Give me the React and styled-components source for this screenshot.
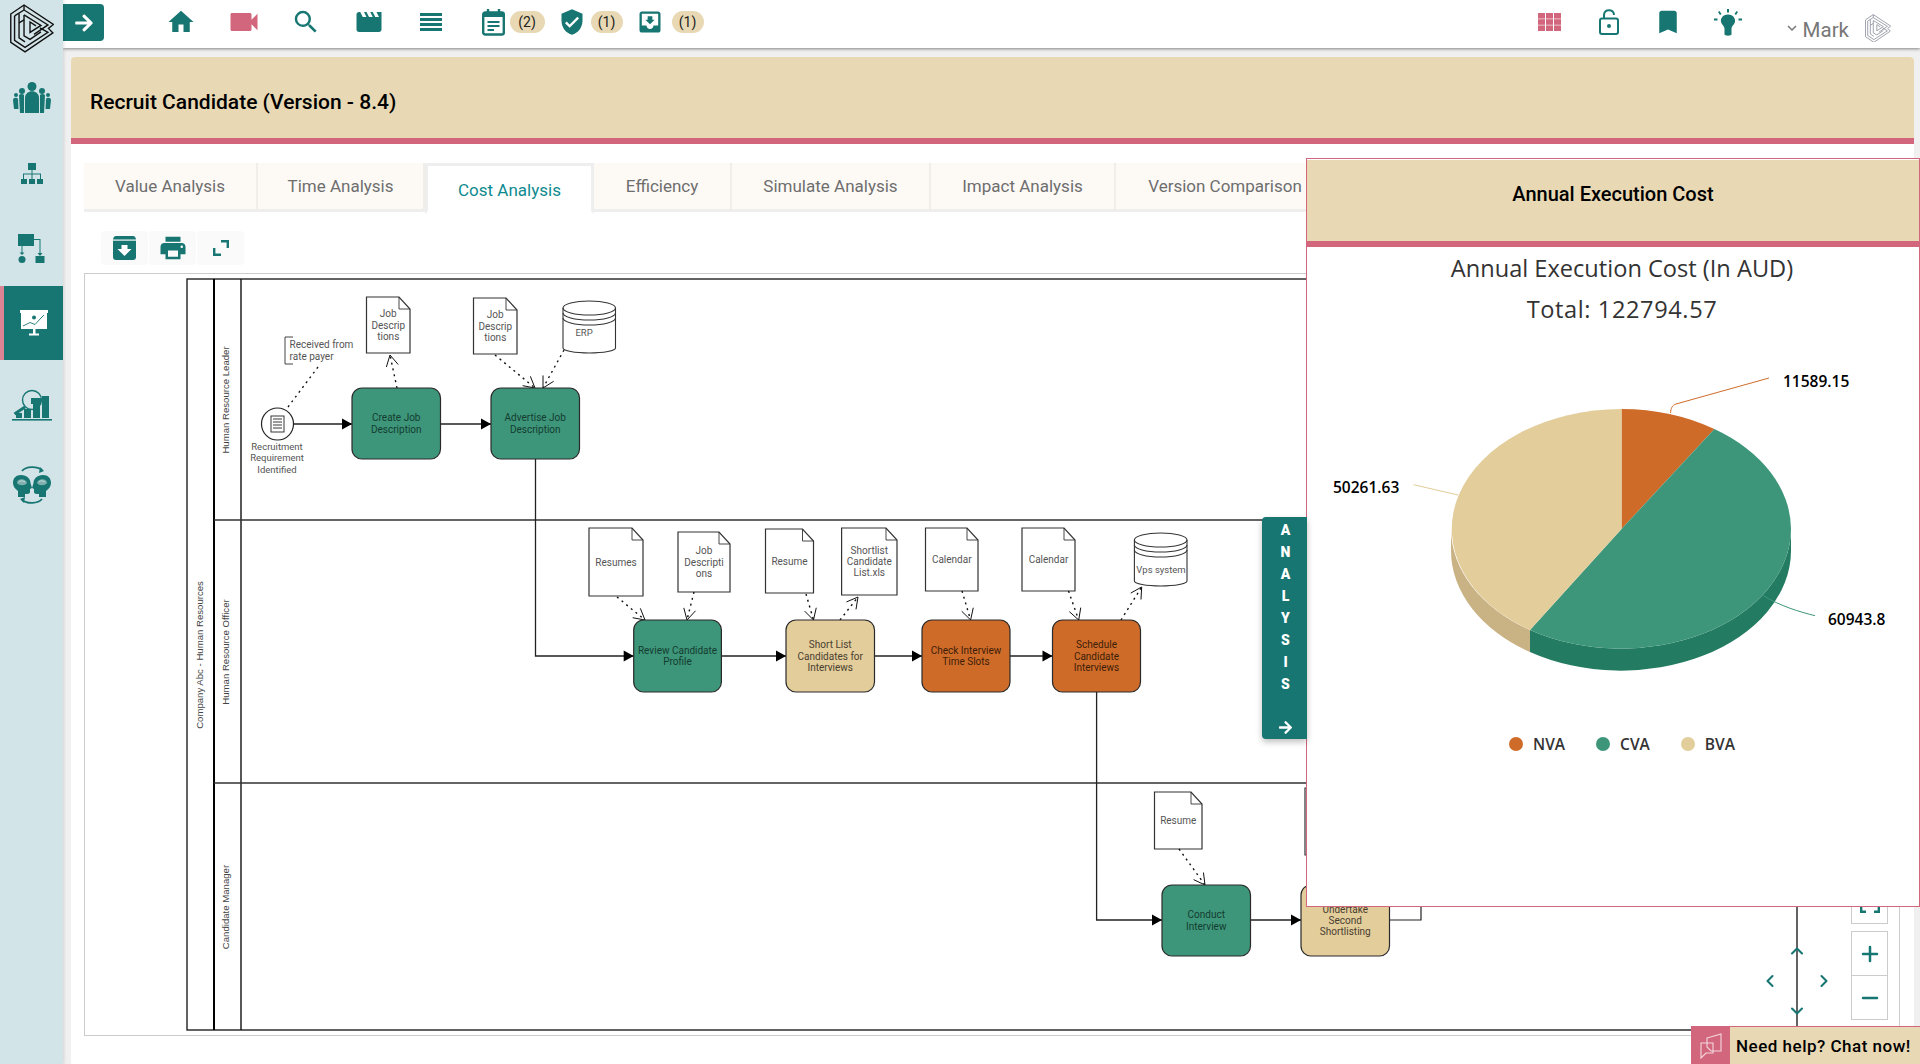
import React from 'react';
import styled, { createGlobalStyle } from 'styled-components';
import { MdHome, MdVideocam, MdSearch, MdMovie, MdVerifiedUser, MdMoveToInbox, MdBookmark, MdPrint, MdKeyboardArrowDown } from 'react-icons/md';
import { FaArrowRight } from 'react-icons/fa';
import { ChevronUp, ChevronDown, ChevronLeft, ChevronRight, Plus, Minus } from 'lucide-react';

const TEAL = '#177672';
const PINK = '#d2667c';
const SAND = '#e8d9b4';
const GREEN = '#3d967a';
const ORANGE = '#cf6b29';
const TAN = '#e2cd9b';

const GlobalStyle = createGlobalStyle`
  html, body { margin: 0; padding: 0; height: 100%; }
  body { font-family: Roboto, "Liberation Sans", sans-serif; overflow: hidden; }
`;

const Shell = styled.div`
  position: relative;
  display: flex;
  height: 100vh;
  background: #f0f0f0;
  overflow: hidden;
`;

const Sidebar = styled.aside`
  width: 63px;
  flex: none;
  display: flex;
  flex-direction: column;
  background: #d3e4e9;
  box-shadow: 1px 0 3px rgba(0, 0, 0, 0.12);
  z-index: 2;
`;

const LogoBox = styled.div`
  height: 61px;
  display: flex;
  justify-content: center;
  padding-top: 4px;
  box-sizing: border-box;
`;

const SideItem = styled.div`
  height: 74px;
  flex: none;
  margin-top: ${(p) => p.$gap || 0}px;
  display: flex;
  align-items: center;
  justify-content: center;
  box-sizing: border-box;
  background: ${(p) => (p.$active ? TEAL : 'transparent')};
  border-left: ${(p) => (p.$active ? '4px solid #dc8396' : 'none')};
  color: ${(p) => (p.$active ? '#fff' : TEAL)};
`;

const Main = styled.div`
  flex: 1;
  min-width: 0;
  display: flex;
  flex-direction: column;
`;

const TopBar = styled.header`
  height: 48px;
  flex: none;
  display: flex;
  background: #fff;
  box-shadow: 0 1px 3px rgba(0, 0, 0, 0.45);
  padding-right: 29px;
  z-index: 1;
`;

const ToggleButton = styled.div`
  width: 41px;
  height: 37px;
  margin-top: 4px;
  margin-right: 46px;
  display: flex;
  align-items: center;
  justify-content: center;
  background: ${TEAL};
  color: #fff;
  border-radius: 0 4px 4px 0;
`;

const Slot = styled.div`
  width: ${(p) => p.$w}px;
  height: 44px;
  display: flex;
  align-items: center;
  justify-content: center;
  color: ${(p) => p.$color || TEAL};
`;

const Notifications = styled.div`
  display: flex;
  align-items: center;
  height: 44px;
  margin-left: 19px;
  gap: 13px;
`;

const Notify = styled.div`
  display: flex;
  align-items: center;
  gap: ${(p) => p.$gap || 5}px;
  color: ${TEAL};
`;

const Badge = styled.span`
  width: ${(p) => p.$w}px;
  height: 22px;
  display: flex;
  align-items: center;
  justify-content: center;
  background: ${SAND};
  border-radius: 11px;
  color: #222;
  font-size: 14px;
`;

const RightTools = styled.div`
  display: flex;
  margin-left: auto;
`;

const UserMenu = styled.div`
  display: flex;
  align-items: center;
  height: 44px;
  margin-left: 25px;
  margin-top: 6px;
  color: #777;
  font-size: 20.5px;
`;

const UserName = styled.span`
  margin: 3px 16px 0 2px;
`;

const Content = styled.main`
  flex: 1;
  min-height: 0;
  display: flex;
  padding: 9px 6px 0 8px;
`;

const Card = styled.section`
  flex: 1;
  min-width: 0;
  display: flex;
  flex-direction: column;
  background: #fff;
  border-radius: 4px 4px 0 0;
`;

const Banner = styled.div`
  height: 87px;
  flex: none;
  box-sizing: border-box;
  display: flex;
  align-items: center;
  padding: 9px 0 0 19px;
  background: ${SAND};
  border-bottom: 6px solid ${PINK};
  border-radius: 4px 4px 0 0;
`;

const BannerTitle = styled.h1`
  margin: 0;
  font-size: 21px;
  font-weight: 500;
  color: #000;
`;

const Tabs = styled.div`
  display: flex;
  flex: none;
  height: 49px;
  margin: 19px 0 0 13px;
`;

const Tab = styled.div`
  width: ${(p) => p.$w}px;
  box-sizing: border-box;
  display: flex;
  align-items: center;
  justify-content: center;
  font-size: 17px;
  background: ${(p) => (p.$active ? '#fff' : '#fdfaf6')};
  color: ${(p) => (p.$active ? '#0e8a8f' : '#6e6e6e')};
  border-bottom: 3px solid ${(p) => (p.$active ? '#fff' : '#eee')};
  border-right: ${(p) => (p.$active ? '3px solid #eee' : '2px solid #f1eeea')};
  border-left: ${(p) => (p.$active ? '3px solid #eee' : 'none')};
  border-top: ${(p) => (p.$active ? '3px solid #eee' : 'none')};
  padding-top: ${(p) => (p.$active ? '3px' : '0')};
  margin-bottom: ${(p) => (p.$active ? '-2px' : '0')};
`;

const Toolbar = styled.div`
  display: flex;
  flex: none;
  gap: 1px;
  margin: 19px 0 0 30px;
`;

const ToolButton = styled.div`
  width: 47px;
  height: 34px;
  display: flex;
  align-items: center;
  justify-content: center;
  background: #fafafa;
  border-radius: 4px;
  color: ${TEAL};
`;

const Canvas = styled.div`
  position: relative;
  flex: 1;
  min-height: 0;
  margin: 8px 14px 28px 13px;
  border: 1px solid #ccc;
  background: #fff;
`;

const DiagramSvg = styled.svg`
  display: block;
`;

const ZoomStack = styled.div`
  position: absolute;
  right: 11px;
  bottom: 15px;
  display: flex;
  flex-direction: column;
  gap: 7px;
`;

const ZoomGroup = styled.div`
  width: 37px;
  display: flex;
  flex-direction: column;
  border: 1px solid #ccc;
  box-sizing: border-box;
  background: #fff;
`;

const ZoomButton = styled.div`
  height: ${(p) => p.$h}px;
  display: flex;
  align-items: center;
  justify-content: center;
  color: ${TEAL};
  & + & { border-top: 1px solid #ccc; }
`;

const NavPad = styled.div`
  position: absolute;
  right: 62px;
  bottom: 9px;
  display: grid;
  grid-template-columns: repeat(3, 27px);
  grid-template-rows: repeat(3, 30px);
  color: ${TEAL};
  place-items: center;
`;

const NavCell = styled.div`
  grid-column: ${(p) => p.$col};
  grid-row: ${(p) => p.$row};
  display: flex;
`;

const Panel = styled.aside`
  position: absolute;
  left: 1306px;
  top: 158px;
  width: 614px;
  height: 749px;
  box-sizing: border-box;
  border: 1px solid ${PINK};
  padding-top: 1px;
  background: #fff;
  z-index: 3;
  display: flex;
  flex-direction: column;
`;

const PanelHeader = styled.div`
  height: 87px;
  flex: none;
  box-sizing: border-box;
  display: flex;
  align-items: center;
  justify-content: center;
  padding-bottom: 13px;
  background: ${SAND};
  border-bottom: 6px solid ${PINK};
  font-size: 20px;
  font-weight: 500;
  color: #000;
`;

const ChartBody = styled.div`
  padding: 1px 0 0 18px;
  display: flex;
  flex-direction: column;
  align-items: center;
`;

const ChartTitle = styled.div`
  font-family: "Open Sans", sans-serif;
  font-size: 23.6px;
  line-height: 41px;
  letter-spacing: ${(p) => p.$spacing || 0}px;
  color: #333;
`;

const ChartSvg = styled.svg`
  display: block;
  margin-top: -1px;
`;

const Legend = styled.div`
  display: flex;
  gap: 31px;
  margin-top: 15px;
  height: 20px;
`;

const LegendItem = styled.div`
  display: flex;
  align-items: center;
  gap: 10px;
  font-family: "Open Sans", sans-serif;
  font-size: 15.5px;
  font-weight: 600;
  color: #333;
`;

const LegendDot = styled.span`
  width: 14px;
  height: 14px;
  border-radius: 50%;
  background: ${(p) => p.$color};
`;

const AnalysisTab = styled.div`
  position: absolute;
  left: -45px;
  top: 358px;
  width: 45px;
  height: 222px;
  box-sizing: border-box;
  padding: 2px 0 0 2px;
  display: flex;
  flex-direction: column;
  align-items: center;
  background: ${TEAL};
  border-radius: 4px 0 0 4px;
  box-shadow: 0 3px 6px rgba(0, 0, 0, 0.25);
  color: #fff;
`;

const AnalysisLetter = styled.span`
  height: 22px;
  line-height: 22px;
  font-size: 14px;
  font-weight: 900;
`;

const AnalysisArrow = styled.div`
  margin-top: auto;
  height: 24px;
  display: flex;
  align-items: center;
`;

const ChatBox = styled.div`
  position: absolute;
  right: 0;
  bottom: 0;
  width: 229px;
  height: 38px;
  display: flex;
  box-sizing: border-box;
  border-top: 1px solid ${PINK};
  background: ${SAND};
  z-index: 4;
`;

const ChatIcon = styled.div`
  width: 39px;
  flex: none;
  display: flex;
  align-items: center;
  justify-content: center;
  background: ${PINK};
`;

const ChatText = styled.div`
  flex: 1;
  display: flex;
  align-items: center;
  padding-left: 6px;
  font-size: 17px;
  font-weight: 500;
  letter-spacing: 0.5px;
  color: #000;
  white-space: nowrap;
`;

const Logo = ({ size = 44, color = '#111' }) => (
  <svg width={size} height={size * 1.11} viewBox="0 0 44 49" fill="none" stroke={color} strokeWidth="1.4" strokeLinejoin="miter">
    <path d="M0.7 10 L14 1 L43.5 20.5 L38.5 24.5 L43 29 L15 48 L0.7 38.5 Z" />
    <path d="M4.5 12 V36.5 L15 43.5 L38 28.5 L30 24" />
    <path d="M9 9.5 V34 L15 38" />
    <path d="M14 1 V6 L38 21 L24 30.5" />
    <path d="M14 11 L31 21.5 L20 28.5 V18 L26 22" />
    <path d="M14 11 V32 L20 35.5 L31 28" />
    <path d="M4.5 12 L14 6" />
    <path d="M9 19 L14 16" />
  </svg>
);

const PeopleIcon = () => (
  <svg width="38" height="32" viewBox="0 0 38 32" fill="currentColor">
    <circle cx="19" cy="4.5" r="4.5" />
    <path d="M12 31 V16 C12 7 26 7 26 16 V31 Z" />
    <circle cx="9" cy="9" r="3" />
    <circle cx="29" cy="9" r="3" />
    <path d="M6 13 C8 11.5 10 12 11 13 L11 31 H7 Z" />
    <path d="M32 13 C30 11.5 28 12 27 13 L27 31 H31 Z" />
    <circle cx="3" cy="13" r="2" />
    <circle cx="35" cy="13" r="2" />
    <path d="M0 18 C0 15.5 4 15 5 17 L5.5 27 H1 Z" />
    <path d="M38 18 C38 15.5 34 15 33 17 L32.5 27 H37 Z" />
  </svg>
);

const OrgIcon = () => (
  <svg width="22" height="22" viewBox="0 0 22 22" fill="currentColor">
    <rect x="7" y="0" width="8" height="7" />
    <path d="M10.5 7 H11.5 V10.5 H20 V16 H19 V11.5 H11.5 V16 H10.5 V11.5 H3 V16 H2 V10.5 H10.5 Z" />
    <rect x="0" y="16" width="6" height="5" />
    <rect x="8" y="16" width="6" height="5" />
    <rect x="16" y="16" width="6" height="5" />
  </svg>
);

const FlowIcon = () => (
  <svg width="27" height="29" viewBox="0 0 27 29" fill="currentColor">
    <rect x="0" y="0" width="16" height="12" />
    <path d="M16 5 H22.5 V21 H21.5 V6 H16 Z" />
    <path d="M3.5 12 H4.5 V19 H3.5 Z" />
    <path d="M1.5 18.5 H6.5 L4 21 Z" />
    <path d="M19.5 19 H24.5 L22 22 Z" />
    <circle cx="4" cy="25.5" r="3.5" />
    <rect x="17.5" y="22" width="9" height="7" />
  </svg>
);

const BoardIcon = () => (
  <svg width="28" height="26" viewBox="0 0 28 26" fill="#fff">
    <rect x="0" y="0" width="28" height="3" />
    <rect x="1" y="3" width="26" height="16" />
    <rect x="13" y="19" width="2.5" height="5" />
    <rect x="9" y="23.5" width="10" height="2" />
    <circle cx="14" cy="7.5" r="2" fill={TEAL} />
    <path d="M3 16 L10 12.5 L15 14.5 L21 8 L24 5" fill="none" stroke={TEAL} strokeWidth="0.9" />
  </svg>
);

const AnalysisIcon = () => (
  <svg width="40" height="32" viewBox="0 0 40 32" fill="currentColor">
    <rect x="0" y="30" width="40" height="1.6" />
    <rect x="30" y="7" width="7" height="22" />
    <rect x="21" y="15" width="7" height="14" />
    <rect x="12" y="20" width="7" height="9" />
    <rect x="4" y="24" width="6" height="5" />
    <rect x="19" y="9" width="10" height="6" />
    <circle cx="20" cy="11" r="9.5" fill="none" stroke="currentColor" strokeWidth="1.4" />
    <path d="M13 18 L2.5 25" fill="none" stroke="currentColor" strokeWidth="3" />
  </svg>
);

const HeadsIcon = () => (
  <svg width="38" height="38" viewBox="0 0 38 38" fill="currentColor">
    <path d="M9 5 C13 0 24 0 29 4" fill="none" stroke="currentColor" strokeWidth="1.8" />
    <path d="M27 1 L31 5 L26 7 Z" />
    <path d="M29 33 C25 38 14 38 9 34" fill="none" stroke="currentColor" strokeWidth="1.8" />
    <path d="M11 37 L7 33 L12 31 Z" />
    <path d="M8 9 C14 9 17.5 13 17.5 17 L19 22 L17 23 V26 C17 28 14 28 12 28 V31 H5 V25 C2 23 0 20 0 17 C0 12 3 9 8 9 Z" />
    <path d="M30 9 C24 9 20.5 13 20.5 17 L19 22 L21 23 V26 C21 28 24 28 26 28 V31 H33 V25 C36 23 38 20 38 17 C38 12 35 9 30 9 Z" />
    <path d="M4 17 C4 12 13 12 14 17 C12 20 6 20 4 17 Z M24 17 C25 12 34 12 34 17 C32 20 26 20 24 17 Z" fill="#7fb0ad" />
    <path d="M6 16 C8 14 10 15 12 16 M26 16 C28 14 30 15 32 16" fill="none" stroke="#d3e4e9" strokeWidth="0.8" />
  </svg>
);

const ListIcon = () => (
  <svg width="22" height="18" viewBox="0 0 22 18" fill="currentColor">
    <rect y="0" width="22" height="3" />
    <rect y="5" width="22" height="3" />
    <rect y="10" width="22" height="3" />
    <rect y="15" width="22" height="3" />
  </svg>
);

const CalendarIcon = () => (
  <svg width="23" height="27" viewBox="0 0 23 27" fill="none" stroke="currentColor" strokeWidth="2.4">
    <rect x="1.2" y="3.5" width="20.6" height="22" rx="2" />
    <path d="M6 0 V4 M17 0 V4" />
    <path d="M1 6 H22" strokeWidth="4" />
    <path d="M5.5 13 H17.5 M5.5 17 H17.5 M5.5 21 H12" strokeWidth="2" />
  </svg>
);

const GridIcon = () => (
  <svg width="23" height="18" viewBox="0 0 23 18" fill={PINK}>
    {[0, 8, 16].map((x) => [0, 6.2, 12.4].map((y) => <rect key={`${x}-${y}`} x={x} y={y} width="7" height="5.6" />))}
  </svg>
);

const LockIcon = () => (
  <svg width="20" height="26" viewBox="0 0 20 26" fill="none" stroke="currentColor" strokeWidth="2">
    <rect x="1" y="9.5" width="18" height="15.5" rx="2" />
    <path d="M5 9.5 V6 C5 -0.5 15 -0.5 15 6" />
    <circle cx="10" cy="17" r="2" fill="currentColor" stroke="none" />
  </svg>
);

const BulbIcon = () => (
  <svg width="28" height="27" viewBox="0 0 28 27" fill="currentColor">
    <path d="M14 5.5 C8.5 5.5 6 10 7.2 13.5 C8 16 10.5 17 10.5 20 V25.5 C10.5 27 17.5 27 17.5 25.5 V20 C17.5 17 20 16 20.8 13.5 C22 10 19.5 5.5 14 5.5 Z" />
    <rect x="13" y="0" width="2" height="3.5" />
    <rect x="0" y="9.5" width="3.5" height="2" />
    <rect x="24.5" y="9.5" width="3.5" height="2" />
    <path d="M4 3 L5.5 2 L7.5 5 L6 6 Z M24 3 L22.5 2 L20.5 5 L22 6 Z" />
  </svg>
);

const ArchiveIcon = () => (
  <svg width="23" height="24" viewBox="0 0 23 24" fill="currentColor">
    <path d="M3 0 H20 C22 0 23 2 23 4 V21 C23 23 22 24 20 24 H3 C1 24 0 23 0 21 V4 C0 2 1 0 3 0 Z" />
    <rect x="0" y="3.5" width="23" height="1.2" fill="#fafafa" />
    <path d="M8.5 9 H14.5 V13 H18.5 L11.5 20 L4.5 13 H8.5 Z" fill="#fff" />
  </svg>
);

const CornersIcon = () => (
  <svg width="16" height="16" viewBox="0 0 16 16" fill="none" stroke="currentColor" strokeWidth="2.4">
    <path d="M8 1.2 H14.8 V8" />
    <path d="M1.2 8 V14.8 H8" />
  </svg>
);

const FitIcon = () => (
  <svg width="20" height="20" viewBox="0 0 20 20" fill="none" stroke="currentColor" strokeWidth="2.4">
    <path d="M1.2 6 V1.2 H6 M14 1.2 H18.8 V6 M18.8 14 V18.8 H14 M6 18.8 H1.2 V14" />
  </svg>
);

const ChatBubbleIcon = () => (
  <svg width="22" height="26" viewBox="0 0 22 26" fill="none" stroke="#f4d7dd" strokeWidth="1.1">
    <path d="M7 5 L21 1 V18 H11 L7 14 Z" />
    <path d="M1 10 H13 V20 H6 L1 25 Z" />
  </svg>
);

const arrowHead = (x1, y1, x2, y2, size = 10) => {
  const a = Math.atan2(y2 - y1, x2 - x1);
  const s = size * 0.55;
  const bx = x2 - Math.cos(a) * size;
  const by = y2 - Math.sin(a) * size;
  return [
    [x2, y2],
    [bx - Math.sin(a) * s, by + Math.cos(a) * s],
    [bx + Math.sin(a) * s, by - Math.cos(a) * s],
  ];
};

const Flow = ({ d, to }) => (
  <g>
    <path d={d} fill="none" stroke="#222" strokeWidth="1.3" />
    {to && <polygon points={arrowHead(to[0], to[1], to[2], to[3]).map((p) => p.join(',')).join(' ')} fill="#000" />}
  </g>
);

const Assoc = ({ x1, y1, x2, y2, open = true }) => {
  const head = arrowHead(x1, y1, x2, y2, 11);
  return (
    <g fill="none" stroke="#111">
      <line x1={x1} y1={y1} x2={x2} y2={y2} strokeWidth="1.4" strokeDasharray="2 4" />
      {open && <polyline points={`${head[1].join(',')} ${head[0].join(',')} ${head[2].join(',')}`} strokeWidth="1" />}
    </g>
  );
};

const Lines = ({ cx, cy, lines, fill, size = 10, gap = 11.3 }) => (
  <text x={cx} textAnchor="middle" fontFamily="Roboto, sans-serif" fontSize={size} fill={fill}>
    {lines.map((line, i) => (
      <tspan key={line} x={cx} y={cy + (i - (lines.length - 1) / 2) * gap + size * 0.35}>{line}</tspan>
    ))}
  </text>
);

const Task = ({ x, w = 88.5, y = 388, h = 71, fill = GREEN, lines, text = '#143c30' }) => (
  <g>
    <rect x={x} y={y} width={w} height={h} rx="10" fill={fill} stroke="#2a2a2a" strokeWidth="1.2" />
    <Lines cx={x + w / 2} cy={y + h / 2} lines={lines} fill={text} size={10} />
  </g>
);

const Doc = ({ x, y, w, h, lines = [] }) => (
  <g>
    <path d={`M${x} ${y} H${x + w - 11} L${x + w} ${y + 12} V${y + h} H${x} Z`} fill="#fff" stroke="#333" strokeWidth="1.2" />
    <path d={`M${x + w - 11} ${y} V${y + 12} H${x + w}`} fill="none" stroke="#333" strokeWidth="0.9" />
    <Lines cx={x + w / 2} cy={y + h / 2} lines={lines} fill="#555" />
  </g>
);

const Cylinder = ({ x, y, w, h, label, labelX, labelY }) => {
  const rx = w / 2;
  return (
    <g fill="none" stroke="#333" strokeWidth="1.1">
      <path d={`M${x} ${y + 7} A${rx} 7 0 0 1 ${x + w} ${y + 7} V${y + h - 5} A${rx} 5 0 0 1 ${x} ${y + h - 5} Z`} fill="#fff" />
      <path d={`M${x} ${y + 7} A${rx} 7 0 0 0 ${x + w} ${y + 7}`} />
      <path d={`M${x} ${y + 12} A${rx} 7 0 0 0 ${x + w} ${y + 12}`} />
      <path d={`M${x} ${y + 17} A${rx} 7 0 0 0 ${x + w} ${y + 17}`} />
      <text x={labelX} y={labelY} textAnchor="middle" fontFamily="Roboto, sans-serif" fontSize="9.5" fill="#555" stroke="none">{label}</text>
    </g>
  );
};

const Rotated = ({ x, y, children }) => (
  <text transform={`translate(${x} ${y}) rotate(-90)`} textAnchor="middle" dominantBaseline="middle" fontFamily="'Liberation Sans', sans-serif" fontSize="9.6" fill="#444">
    {children}
  </text>
);

const Diagram = () => (
  <DiagramSvg width="1814" height="761" viewBox="85 274 1814 761">
    {/* pool and lanes */}
    <rect x="187" y="279" width="1610" height="751" fill="none" stroke="#222" strokeWidth="1.4" />
    <path d="M214 279 V1030" stroke="#000" strokeWidth="2" />
    <path d="M241 279 V1030" stroke="#111" strokeWidth="1.4" />
    <path d="M214 520 H1797 M214 783 H1797" stroke="#333" strokeWidth="1.5" />
    <Rotated x={200} y={655}>Company Abc - Human Resources</Rotated>
    <Rotated x={226} y={400}>Human Resource Leader</Rotated>
    <Rotated x={226} y={652}>Human Resource Officer</Rotated>
    <Rotated x={226} y={907}>Candidate Manager</Rotated>

    {/* first lane */}
    <circle cx="277.5" cy="424" r="16" fill="#fff" stroke="#222" strokeWidth="1.2" />
    <g fill="none" stroke="#222" strokeWidth="0.9">
      <rect x="271" y="416" width="13" height="16" />
      <path d="M273 419 H282 M273 422 H282 M273 425 H282 M273 428 H282" />
    </g>
    <Lines cx={277} cy={458} lines={['Recruitment', 'Requirement', 'Identified']} fill="#555" size={9.5} />
    <path d="M293 337 H285 V364 H293" fill="none" stroke="#444" strokeWidth="1" />
    <text fontFamily="Roboto, sans-serif" fontSize="10" fill="#555">
      <tspan x="289.5" y="348">Received from</tspan>
      <tspan x="289.5" y="359.5">rate payer</tspan>
    </text>
    <Assoc x1={318} y1={367} x2={288} y2={407} open={false} />
    <Doc x={366.5} y={297} w={43.5} h={56} lines={['Job', 'Descrip', 'tions']} />
    <Doc x={473.5} y={298} w={43.5} h={56} lines={['Job', 'Descrip', 'tions']} />
    <Cylinder x={563} y={301} w={52.5} h={52} label="ERP" labelX={584} labelY={336} />
    <Assoc x1={397} y1={388} x2={390} y2={355} />
    <Assoc x1={495} y1={355} x2={535} y2={388} />
    <Assoc x1={564} y1={350} x2={543} y2={388} />
    <Flow d="M293.5 424 H352" to={[293.5, 424, 352, 424]} />
    <Flow d="M441 424 H491" to={[441, 424, 491, 424]} />
    <Task x={352} lines={['Create Job', 'Description']} />
    <Task x={491} lines={['Advertise Job', 'Description']} />

    {/* second lane */}
    <Flow d="M535.5 459 V656 H633.7" to={[535.5, 656, 633.7, 656]} />
    <Doc x={589} y={528} w={54} h={68} lines={['Resumes']} />
    <Doc x={678} y={532} w={52} h={60} lines={['Job', 'Descripti', 'ons']} />
    <Doc x={765.5} y={529} w={48} h={64} lines={['Resume']} />
    <Doc x={841.6} y={528} w={55.4} h={67} lines={['Shortlist', 'Candidate', 'List.xls']} />
    <Doc x={925.5} y={528} w={52.5} h={63} lines={['Calendar']} />
    <Doc x={1022} y={528} w={53} h={63} lines={['Calendar']} />
    <Cylinder x={1134.4} y={533} w={52.6} h={53} label="Vps system" labelX={1161} labelY={573} />
    <Assoc x1={617} y1={597} x2={645} y2={620} />
    <Assoc x1={694} y1={592} x2={687} y2={620} />
    <Assoc x1={806} y1={594} x2={813.5} y2={620} />
    <Assoc x1={840} y1={620} x2={858} y2={597} />
    <Assoc x1={962} y1={591} x2={970.6} y2={620} />
    <Assoc x1={1068.5} y1={591} x2={1078.7} y2={620} />
    <Assoc x1={1121} y1={620} x2={1141.7} y2={587} />
    <Flow d="M722 656 H786" to={[722, 656, 786, 656]} />
    <Flow d="M875 656 H922" to={[875, 656, 922, 656]} />
    <Flow d="M1010 656 H1052.5" to={[1010, 656, 1052.5, 656]} />
    <Task x={633.7} y={620} h={72} w={87.7} lines={['Review Candidate', 'Profile']} />
    <Task x={786} y={620} h={72} fill={TAN} text="#4a4030" lines={['Short List', 'Candidates for', 'Interviews']} />
    <Task x={922} y={620} h={72} w={88} fill={ORANGE} text="#3c1e08" lines={['Check Interview', 'Time Slots']} />
    <Task x={1052.5} y={620} h={72} w={88} fill={ORANGE} text="#3c1e08" lines={['Schedule', 'Candidate', 'Interviews']} />

    {/* third lane */}
    <Flow d="M1096.6 692 V920 H1162" to={[1096.6, 920, 1162, 920]} />
    <Doc x={1154.5} y={792} w={47.5} h={57} lines={['Resume']} />
    <Doc x={1305} y={788} w={40} h={67} />
    <Assoc x1={1179} y1={849} x2={1205} y2={885} />
    <Flow d="M1250 920 H1301" to={[1250, 920, 1301, 920]} />
    <path d="M1389 920 H1421 V900" fill="none" stroke="#222" strokeWidth="1.2" />
    <Task x={1162} y={885} h={71} lines={['Conduct', 'Interview']} />
    <Task x={1301} y={885} h={71} fill={TAN} text="#4a4030" lines={['Undertake', 'Second', 'Shortlisting']} />
  </DiagramSvg>
);

const PieLabel = ({ x, y, children }) => (
  <text x={x} y={y} fontFamily="'Open Sans', sans-serif" fontSize="15.5" fontWeight="600" fill="#000" dominantBaseline="middle">
    {children}
  </text>
);

const PieChart = () => (
  <ChartSvg width="594" height="390" viewBox="1325 330 594 390">
    <path d="M1791 530 A170 120 0 0 1 1530 631 L1530 653 A170 120 0 0 0 1791 552 Z" fill="#237c62" />
    <path d="M1530 631 A170 120 0 0 1 1451 530 L1451 552 A170 120 0 0 0 1530 653 Z" fill="#c9b283" />
    <path d="M1621.5 530 L1621.5 410 A170 120 0 0 1 1714.4 430 Z" fill={ORANGE} />
    <path d="M1621.5 530 L1714.4 430 A170 120 0 0 1 1791 530 A170 120 0 0 1 1530 631 Z" fill={GREEN} />
    <path d="M1621.5 530 L1530 631 A170 120 0 0 1 1621.5 410 Z" fill={TAN} />
    <path d="M1670.5 414 C1671 409 1672 406.5 1676 405 L1769 379" fill="none" stroke={ORANGE} strokeWidth="1" />
    <path d="M1413.5 485.7 L1458 496" fill="none" stroke={TAN} strokeWidth="1" />
    <path d="M1763.4 596.7 C1780 607 1800 613 1815 616.7" fill="none" stroke={GREEN} strokeWidth="1" />
    <PieLabel x={1783} y={384}>11589.15</PieLabel>
    <PieLabel x={1333} y={489.5}>50261.63</PieLabel>
    <PieLabel x={1828} y={621.5}>60943.8</PieLabel>
  </ChartSvg>
);

const tabs = [
  { label: 'Value Analysis', w: 174 },
  { label: 'Time Analysis', w: 167 },
  { label: 'Cost Analysis', w: 169, active: true },
  { label: 'Efficiency', w: 138 },
  { label: 'Simulate Analysis', w: 199 },
  { label: 'Impact Analysis', w: 185 },
  { label: 'Version Comparison', w: 220 },
];

const legend = [
  { label: 'NVA', color: ORANGE },
  { label: 'CVA', color: GREEN },
  { label: 'BVA', color: TAN },
];

const App = () => (
  <Shell>
    <GlobalStyle />
    <Sidebar>
      <LogoBox><Logo /></LogoBox>
      <SideItem><PeopleIcon /></SideItem>
      <SideItem $gap={2}><OrgIcon /></SideItem>
      <SideItem><FlowIcon /></SideItem>
      <SideItem $gap={1} $active><BoardIcon /></SideItem>
      <SideItem $gap={8}><AnalysisIcon /></SideItem>
      <SideItem $gap={6}><HeadsIcon /></SideItem>
    </Sidebar>
    <Main>
      <TopBar>
        <ToggleButton><FaArrowRight size={20} /></ToggleButton>
        <Slot $w={62.5}><MdHome size={30} /></Slot>
        <Slot $w={62.5} $color={PINK}><MdVideocam size={36} /></Slot>
        <Slot $w={62.5}><MdSearch size={30} /></Slot>
        <Slot $w={62.5}><MdMovie size={30} /></Slot>
        <Slot $w={62.5}><ListIcon /></Slot>
        <Notifications>
          <Notify><CalendarIcon /><Badge $w={35}>(2)</Badge></Notify>
          <Notify><MdVerifiedUser size={28} /><Badge $w={32}>(1)</Badge></Notify>
          <Notify $gap={8}><MdMoveToInbox size={28} /><Badge $w={32}>(1)</Badge></Notify>
        </Notifications>
        <RightTools>
          <Slot $w={59.5}><GridIcon /></Slot>
          <Slot $w={59.5}><LockIcon /></Slot>
          <Slot $w={59.5}><MdBookmark size={30} /></Slot>
          <Slot $w={59.5}><BulbIcon /></Slot>
          <UserMenu>
            <MdKeyboardArrowDown size={18} />
            <UserName>Mark</UserName>
            <Logo size={26} color="#8a8f9c" />
          </UserMenu>
        </RightTools>
      </TopBar>
      <Content>
        <Card>
          <Banner><BannerTitle>Recruit Candidate (Version - 8.4)</BannerTitle></Banner>
          <Tabs>
            {tabs.map((tab) => (
              <Tab key={tab.label} $w={tab.w} $active={tab.active}>{tab.label}</Tab>
            ))}
          </Tabs>
          <Toolbar>
            <ToolButton><ArchiveIcon /></ToolButton>
            <ToolButton><MdPrint size={30} /></ToolButton>
            <ToolButton><CornersIcon /></ToolButton>
          </Toolbar>
          <Canvas>
            <Diagram />
            <NavPad>
              <NavCell $col={2} $row={1}><ChevronUp size={20} strokeWidth={2.5} /></NavCell>
              <NavCell $col={1} $row={2}><ChevronLeft size={20} strokeWidth={2.5} /></NavCell>
              <NavCell $col={3} $row={2}><ChevronRight size={20} strokeWidth={2.5} /></NavCell>
              <NavCell $col={2} $row={3}><ChevronDown size={20} strokeWidth={2.5} /></NavCell>
            </NavPad>
            <ZoomStack>
              <ZoomGroup><ZoomButton $h={40}><FitIcon /></ZoomButton></ZoomGroup>
              <ZoomGroup>
                <ZoomButton $h={43}><Plus size={24} strokeWidth={2.5} /></ZoomButton>
                <ZoomButton $h={43}><Minus size={24} strokeWidth={2.5} /></ZoomButton>
              </ZoomGroup>
            </ZoomStack>
          </Canvas>
        </Card>
      </Content>
    </Main>
    <Panel>
      <AnalysisTab>
        {'ANALYSIS'.split('').map((letter, i) => (
          <AnalysisLetter key={i}>{letter}</AnalysisLetter>
        ))}
        <AnalysisArrow><FaArrowRight size={15} /></AnalysisArrow>
      </AnalysisTab>
      <PanelHeader>Annual Execution Cost</PanelHeader>
      <ChartBody>
        <ChartTitle>Annual Execution Cost (In AUD)</ChartTitle>
        <ChartTitle $spacing={0.6}>Total: 122794.57</ChartTitle>
        <PieChart />
        <Legend>
          {legend.map((item) => (
            <LegendItem key={item.label}>
              <LegendDot $color={item.color} />
              {item.label}
            </LegendItem>
          ))}
        </Legend>
      </ChartBody>
    </Panel>
    <ChatBox>
      <ChatIcon><ChatBubbleIcon /></ChatIcon>
      <ChatText>Need help? Chat now!</ChatText>
    </ChatBox>
  </Shell>
);

export default App;
